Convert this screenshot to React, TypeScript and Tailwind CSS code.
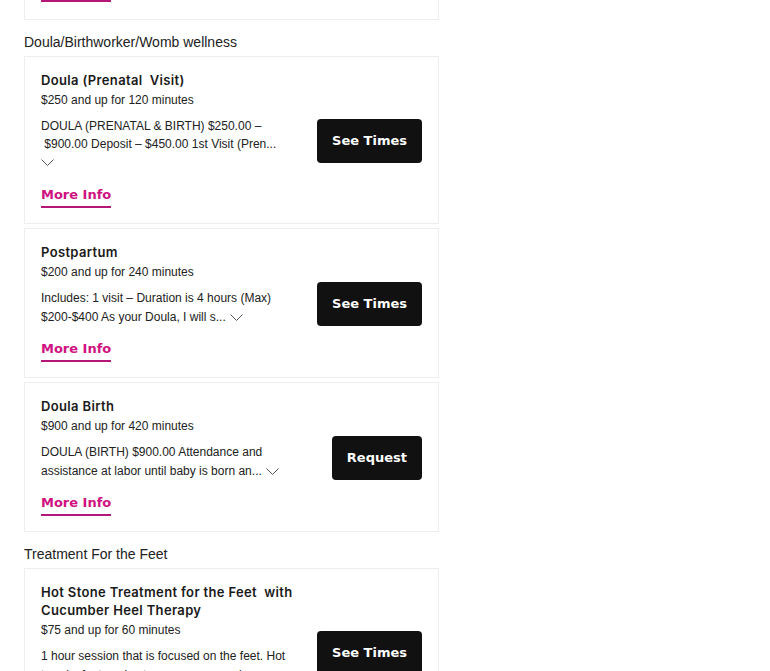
import React from "react";

type Service = {
  title: React.ReactNode;
  price: string;
  lines: React.ReactNode[];
  chevronOwnLine?: boolean;
  leading: string;
  action: string;
};

const Chevron: React.FC = () => (
  <svg
    className="inline-block w-[13px] h-[7px] align-baseline ml-[4px]"
    viewBox="0 0 13 7"
    fill="none"
  >
    <path d="M0.5 0.5 L6.5 6.5 L12.5 0.5" stroke="#555" strokeWidth="1" />
  </svg>
);

const MoreInfo: React.FC = () => (
  <a
    href="#"
    className="inline-block font-['DejaVu_Sans',sans-serif] font-bold text-[13px] leading-[16px] text-[#cf1381] pb-[3px] border-b-2 border-[#b5167a]"
  >
    More Info
  </a>
);

const ServiceCard: React.FC<{ s: Service }> = ({ s }) => (
  <div className="bg-white border border-[#eeeeee] mb-[4px] flex items-center justify-between pl-[16px] pr-[16px] pt-[14px] pb-[15px]">
    <div className="w-[262px]">
      <div className="font-['Inter',sans-serif] font-semibold text-[13px] leading-[18px] tracking-[0.35px] text-[#1a1a1a] whitespace-pre-wrap">
        {s.title}
      </div>
      <div className="mt-[2px] text-[12px] leading-[18px] text-[#222]">
        {s.price}
      </div>
      <div className={`mt-[8px] text-[12px] ${s.leading} text-[#222]`}>
        {s.lines.map((l, i) => (
          <div key={i} className="whitespace-nowrap">
            {l}
            {!s.chevronOwnLine && i === s.lines.length - 1 && <Chevron />}
          </div>
        ))}
        {s.chevronOwnLine && (
          <div className="h-[20px] leading-[18px] -ml-[4px]">
            <Chevron />
          </div>
        )}
      </div>
      <div className="mt-[14px] flex">
        <MoreInfo />
      </div>
    </div>
    <button className="mt-[2px] bg-[#111111] text-white rounded-[4px] h-[44px] px-[15px] font-['DejaVu_Sans',sans-serif] font-bold text-[13px]">
      {s.action}
    </button>
  </div>
);

const doula: Service[] = [
  {
    title: "Doula (Prenatal  Visit)",
    price: "$250 and up for 120 minutes",
    lines: [
      "DOULA (PRENATAL & BIRTH) $250.00 –",
      "\u00a0$900.00 Deposit – $450.00 1st Visit (Pren...",
    ],
    chevronOwnLine: true,
    leading: "leading-[18px]",
    action: "See Times",
  },
  {
    title: "Postpartum",
    price: "$200 and up for 240 minutes",
    lines: [
      "Includes: 1 visit – Duration is 4 hours (Max)",
      "$200-$400 As your Doula, I will s...",
    ],
    leading: "leading-[19px]",
    action: "See Times",
  },
  {
    title: "Doula Birth",
    price: "$900 and up for 420 minutes",
    lines: [
      "DOULA (BIRTH) $900.00 Attendance and",
      "assistance at labor until baby is born an...",
    ],
    leading: "leading-[19px]",
    action: "Request",
  },
];

const feet: Service[] = [
  {
    title: (
      <>
        {"Hot Stone Treatment for the Feet  with"}
        <br />
        Cucumber Heel Therapy
      </>
    ),
    price: "$75 and up for 60 minutes",
    lines: [
      "1 hour session that is focused on the feet. Hot",
      "towels, foot soak, stone massage and...",
    ],
    leading: "leading-[19px]",
    action: "See Times",
  },
];

const App: React.FC = () => {
  return (
    <div className="min-h-screen bg-white font-['Liberation_Sans',Arial,sans-serif] overflow-hidden">
      <div className="w-[415px] ml-[24px]">
        {/* tail of the previous card */}
        <div className="h-[20px] border-x border-b border-[#eeeeee] overflow-hidden pl-[16px]">
          <div className="-mt-[19px] flex">
            <MoreInfo />
          </div>
        </div>

        <h3 className="mt-[12px] mb-[4px] text-[14px] leading-[20px] text-[#222]">
          Doula/Birthworker/Womb wellness
        </h3>
        {doula.map((s, i) => (
          <ServiceCard key={i} s={s} />
        ))}

        <h3 className="mt-[12px] mb-[4px] text-[14px] leading-[20px] text-[#222]">
          Treatment For the Feet
        </h3>
        {feet.map((s, i) => (
          <ServiceCard key={i} s={s} />
        ))}
      </div>
    </div>
  );
};

export default App;
